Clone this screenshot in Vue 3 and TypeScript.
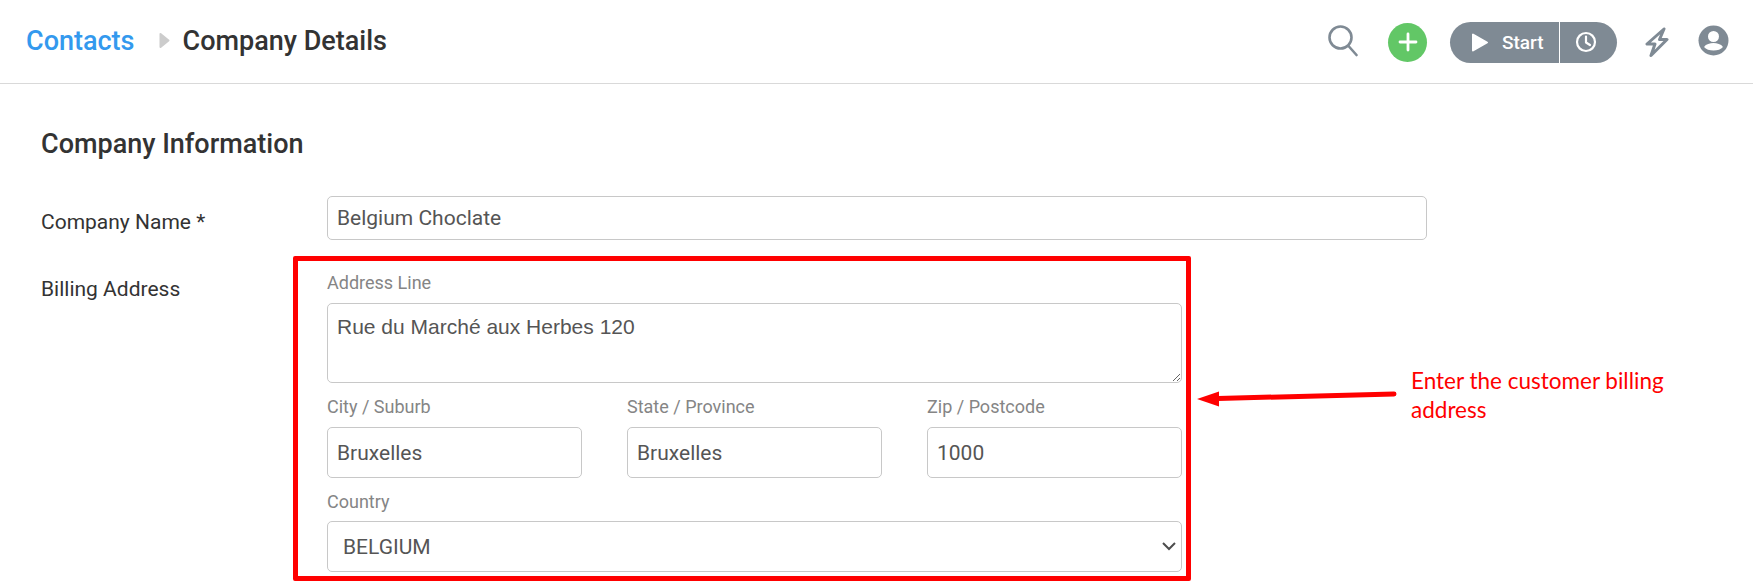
<script setup lang="ts">
const cities = [
  { label: 'City / Suburb', value: 'Bruxelles' },
  { label: 'State / Province', value: 'Bruxelles' },
  { label: 'Zip / Postcode', value: '1000' },
]
</script>

<template>
  <div class="page">
    <header class="top">
      <nav class="crumbs">
        <a class="link">Contacts</a>
        <svg class="sep" width="11" height="17" viewBox="0 0 11 17"><path d="M1.5 2v13l8-6.5z" fill="#ccc" stroke="#ccc" stroke-width="2" stroke-linejoin="round"/></svg>
        <span class="current">Company Details</span>
      </nav>
      <div class="actions">
        <svg class="search" width="30" height="32" viewBox="0 0 30 32" fill="none" stroke="#7f8a94" stroke-width="2.6" stroke-linecap="round"><circle cx="12.5" cy="12.5" r="11"/><path d="M20.5 21l8 9"/></svg>
        <button class="plus" aria-label="Add"><svg width="20" height="20" viewBox="0 0 20 20" stroke="#fff" stroke-width="2.8" stroke-linecap="round"><path d="M10 2v16M2 10h16"/></svg></button>
        <div class="timer">
          <button class="start">
            <svg width="18" height="21" viewBox="0 0 18 21"><path d="M2 2.5v16L16 10.5z" fill="#fff" stroke="#fff" stroke-width="2" stroke-linejoin="round"/></svg>
            <span>Start</span>
          </button>
          <button class="clock" aria-label="Schedule">
            <svg width="22" height="22" viewBox="0 0 22 22" fill="none" stroke="#fff" stroke-width="2.2" stroke-linecap="round" stroke-linejoin="round"><circle cx="11" cy="11" r="9"/><path d="M11 5.5V11.5l4 2.5"/></svg>
          </button>
        </div>
        <svg class="bolt" width="24" height="32" viewBox="0 0 24 32" fill="none" stroke="#7f8a94" stroke-width="3" stroke-linejoin="round"><path d="M19 3L2 18h8L6 29.5 22 13.5h-7.5z"/></svg>
        <svg class="user" width="31" height="31" viewBox="0 0 31 31"><circle cx="15.5" cy="15.5" r="15" fill="#7f8a94"/><circle cx="15.5" cy="11.5" r="5.5" fill="#fff"/><path d="M6 22c2-3 6-4 9.5-4s7.5 1 9.5 4c-2 2.5-5.5 3.5-9.5 3.5S8 24.5 6 22z" fill="#fff"/></svg>
      </div>
    </header>

    <main class="content">
      <h2 class="title">Company Information</h2>
      <div class="row first">
        <label class="row-label">Company Name *</label>
        <input class="field" value="Belgium Choclate" />
      </div>
      <div class="row billing">
        <label class="row-label">Billing Address</label>
        <div class="address">
          <label class="small">Address Line</label>
          <textarea class="field area">Rue du Marché aux Herbes 120</textarea>
          <div class="trio">
            <div v-for="c in cities" :key="c.label" class="cell">
              <label class="small">{{ c.label }}</label>
              <input class="field tall" :value="c.value" />
            </div>
          </div>
          <label class="small country">Country</label>
          <div class="select-wrap">
            <select class="field tall select"><option>BELGIUM</option></select>
            <svg class="chev" width="14" height="9" viewBox="0 0 14 9" fill="none" stroke="#4d4d4d" stroke-width="2"><path d="M1 1l6 6 6-6"/></svg>
          </div>
          <div class="redbox"></div>
          <svg class="arrow" width="200" height="20" viewBox="0 0 200 20"><path d="M21 9.5L197 5" stroke="#f00" stroke-width="5" stroke-linecap="round" fill="none"/><path d="M0 10L22 2.5V17.5z" fill="#f00"/></svg>
          <p class="note">Enter the customer billing<br />address</p>
        </div>
      </div>
    </main>
  </div>
</template>

<style>
html, body { margin: 0; background: #fff; }
</style>

<style scoped>
.page { width: 1753px; height: 585px; overflow: hidden; font-family: Roboto, sans-serif; color: #333; background: #fff; }
.top { height: 83px; box-sizing: content-box; border-bottom: 1px solid #d9d9d9; display: flex; align-items: center; justify-content: space-between; padding: 0 24px 0 26px; }
.crumbs { display: flex; align-items: center; font-size: 27px; font-weight: 500; line-height: 30px; margin-top: -2px; }
.link { color: #3399ee; }
.sep { margin: 0 13px 0 24px; }
.current { color: #333; }
.actions { display: flex; align-items: center; margin-top: 1px; }
.search { margin: -3px 30px 0 0; }
.plus { width: 39px; height: 39px; border: 0; border-radius: 50%; background: #62c766; padding: 0; display: flex; align-items: center; justify-content: center; margin-right: 23px; }
.timer { display: flex; height: 41px; border-radius: 21px; overflow: hidden; background: #7f8a94; color: #fff; margin-right: 28px; }
.timer button { border: 0; background: none; color: #fff; font: 500 19px Roboto, sans-serif; padding: 0; display: flex; align-items: center; }
.start { width: 110px; padding-left: 21px !important; gap: 13px; border-right: 1px solid #fff !important; box-sizing: border-box; }
.clock { width: 57px; padding-left: 15px !important; }
.bolt { margin-right: 29px; }
.user { margin-top: -3px; }
.content { padding: 0 0 0 41px; }
.title { margin: 0; font-size: 27px; font-weight: 500; line-height: 30px; padding-top: 45px; color: #333; }
.row { display: grid; grid-template-columns: 286px 1100px; }
.first { margin-top: 37px; }
.billing { margin-top: 31px; }
.row-label { font-size: 21px; line-height: 24px; color: #333; }
.first .row-label { padding-top: 14px; }
.billing .row-label { padding-top: 6px; }
.field { display: block; width: 100%; box-sizing: border-box; height: 44px; border: 1px solid #c8c8c8; border-radius: 5px; padding: 0 9px; font: 400 21px Roboto, sans-serif; color: #555; background: #fff; outline: none; }
.address { position: relative; width: 855px; }
.small { display: block; font-size: 18px; line-height: 24px; color: #858585; }
.area { height: 80px; margin-top: 8px; padding: 11px 9px; font-family: "Liberation Sans", sans-serif; resize: vertical; line-height: 24px; }
.trio { display: grid; grid-template-columns: repeat(3, 255px); column-gap: 45px; margin-top: 12px; }
.cell .tall { margin-top: 8px; }
.tall { height: 51px; }
.country { margin-top: 12px; }
.select-wrap { position: relative; margin-top: 7px; }
.select { appearance: none; padding-left: 15px; }
.chev { position: absolute; right: 6px; top: 21px; }
.redbox { position: absolute; left: -34px; top: -15px; width: 898px; height: 325px; box-sizing: border-box; border: 5px solid #f00; border-radius: 2px; pointer-events: none; }
.arrow { position: absolute; left: 870px; top: 118px; }
.note { position: absolute; left: 1084px; top: 95px; margin: 0; width: 320px; font: 400 22.5px/29px Lato, sans-serif; color: #f00; }
</style>
